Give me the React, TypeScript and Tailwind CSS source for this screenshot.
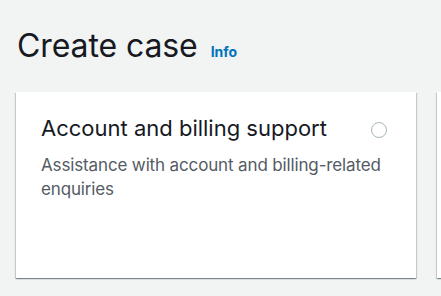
export default function App() {
  return (
    <div className="min-h-screen overflow-hidden bg-[#f2f3f3] font-['Inter',sans-serif]">
      <div className="flex items-baseline gap-[13px] px-[17px] pt-[26px]">
        <h1 className="text-[32px] leading-[40px] tracking-[-0.1px] text-[#16191f]">Create case</h1>
        <a className="text-[14px] font-bold text-[#0073bb]">Info</a>
      </div>

      <div className="mt-[26px] flex gap-[21px] pl-4">
        <div className="h-[186px] w-[400px] shrink-0 bg-white shadow-[0_1px_1px_0_rgba(0,28,36,0.3),1px_1px_1px_0_rgba(0,28,36,0.15),-1px_1px_1px_0_rgba(0,28,36,0.15)]">
          <div className="flex items-start justify-between pl-[25px] pr-[29px] pt-[21px]">
            <h2 className="text-[22px] leading-[30px] text-[#16191f]">
              Account and billing support
            </h2>
            <span className="mt-[9px] block h-4 w-4 rounded-full border-[1.5px] border-[#aab7b8] bg-white" />
          </div>
          <p className="mt-[10px] pl-[25px] pr-[20px] text-[17px] leading-[24px] tracking-[-0.14px] text-[#545b64]">
            Assistance with account and billing-related enquiries
          </p>
        </div>
        <div className="h-[186px] w-[400px] shrink-0 bg-white shadow-[0_1px_1px_0_rgba(0,28,36,0.3),1px_1px_1px_0_rgba(0,28,36,0.15),-1px_1px_1px_0_rgba(0,28,36,0.15)]" />
      </div>
    </div>
  );
}
